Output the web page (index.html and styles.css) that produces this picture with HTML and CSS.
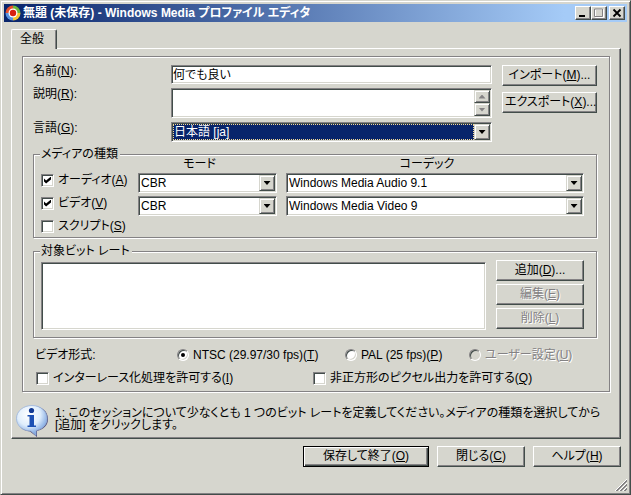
FILE: index.html
```
<!DOCTYPE html>
<html lang="ja">

<head>
    <meta charset="UTF-8">
    <meta name="viewport" content="width=device-width, initial-scale=1.0">
    <title>Windows Media プロファイル エディタ</title>
    <link rel="stylesheet" href="styles.css">
</head>

<body>
    <div class="window">
        <header class="titlebar">
            <svg class="app-icon" width="16" height="16" viewBox="0 0 16 16">
                <path d="M8 8V.5A7.5 7.5 0 0 0 .5 8z" fill="#e8502a" />
                <path d="M8 8V.5A7.5 7.5 0 0 1 15.5 8z" fill="#6cb83c" />
                <path d="M8 8h7.5A7.5 7.5 0 0 1 8 15.5z" fill="#f4c430" />
                <path d="M8 8H.5A7.5 7.5 0 0 0 8 15.5z" fill="#5a94e0" />
                <circle cx="8" cy="8" r="4.5" fill="#fff" />
                <circle cx="8" cy="8" r="3.2" fill="#d82010" />
            </svg>
            <h1>無題 (未保存) - Windows Media プロファイル エディタ</h1>
            <div class="captions">
                <button type="button" class="caption" aria-label="最小化">
                    <svg width="12" height="10" viewBox="0 0 12 10"><path d="M2 7h6v2H2z" /></svg>
                </button>
                <button type="button" class="caption" aria-label="最大化" disabled>
                    <svg width="12" height="10" viewBox="0 0 12 10"><path d="M2.500 1.500h8v8h-8z" fill="none" stroke="#fff" /><path d="M1.500 1h8v7.500h-8z" fill="none" stroke="#848284" /></svg>
                </button>
                <button type="button" class="caption close" aria-label="閉じる">
                    <svg width="12" height="10" viewBox="0 0 12 10"><path d="M2.500 1.500l7 7M9.500 1.500l-7 7" stroke="#000" stroke-width="1.800" /></svg>
                </button>
            </div>
        </header>

        <main class="sheet">
            <div class="tabs" role="tablist">
                <button type="button" class="tab" role="tab" aria-selected="true">全般</button>
            </div>
            <div class="panel">
                <form class="frame">
                    <div class="profile">
                        <div class="fields">
                            <label for="name">名前(<u>N</u>):</label>
                            <input type="text" id="name" class="sunken" value="何でも良い">

                            <label for="description">説明(<u>R</u>):</label>
                            <div class="memo sunken">
                                <textarea id="description"></textarea>
                                <div class="scroll">
                                    <span class="arrow up"></span>
                                    <span class="arrow"></span>
                                </div>
                            </div>

                            <label for="language">言語(<u>G</u>):</label>
                            <div class="combo sunken focused">
                                <select id="language"><option>日本語 [ja]</option></select>
                                <span class="arrow"></span>
                            </div>
                        </div>
                        <div class="side wide">
                            <button type="button" class="btn">インポート(<u>M</u>)...</button>
                            <button type="button" class="btn">エクスポート(<u>X</u>)...</button>
                        </div>
                    </div>

                    <fieldset>
                        <legend>メディアの種類</legend>
                        <div class="media">
                            <span></span>
                            <span class="heading">モード</span>
                            <span class="heading">コーデック</span>

                            <label class="option"><input type="checkbox" checked><span>オーディオ(<u>A</u>)</span></label>
                            <div class="combo sunken">
                                <select aria-label="オーディオ モード"><option>CBR</option></select>
                                <span class="arrow"></span>
                            </div>
                            <div class="combo sunken">
                                <select aria-label="オーディオ コーデック"><option>Windows Media Audio 9.1</option></select>
                                <span class="arrow"></span>
                            </div>

                            <label class="option"><input type="checkbox" checked><span>ビデオ(<u>V</u>)</span></label>
                            <div class="combo sunken">
                                <select aria-label="ビデオ モード"><option>CBR</option></select>
                                <span class="arrow"></span>
                            </div>
                            <div class="combo sunken">
                                <select aria-label="ビデオ コーデック"><option>Windows Media Video 9</option></select>
                                <span class="arrow"></span>
                            </div>

                            <label class="option"><input type="checkbox"><span>スクリプト(<u>S</u>)</span></label>
                        </div>
                    </fieldset>

                    <fieldset>
                        <legend>対象ビット レート</legend>
                        <div class="rates">
                            <select class="list sunken" size="5" aria-label="対象ビット レート"></select>
                            <div class="side">
                                <button type="button" class="btn">追加(<u>D</u>)...</button>
                                <button type="button" class="btn" disabled>編集(<u>E</u>)</button>
                                <button type="button" class="btn" disabled>削除(<u>L</u>)</button>
                            </div>
                        </div>
                    </fieldset>

                    <div class="format">
                        <span>ビデオ形式:</span>
                        <label class="option"><input type="radio" name="format" checked><span>NTSC (29.97/30 fps)(<u>T</u>)</span></label>
                        <label class="option"><input type="radio" name="format"><span>PAL (25 fps)(<u>P</u>)</span></label>
                        <label class="option disabled"><input type="radio" name="format" disabled><span>ユーザー設定(<u>U</u>)</span></label>
                    </div>
                    <div class="output">
                        <label class="option"><input type="checkbox"><span>インターレース化処理を許可する(<u>I</u>)</span></label>
                        <label class="option"><input type="checkbox"><span>非正方形のピクセル出力を許可する(<u>Q</u>)</span></label>
                    </div>
                </form>

                <div class="info">
                    <svg width="32" height="32" viewBox="0 0 32 32">
                        <defs>
                            <radialGradient id="bubble" cx=".4" cy=".3" r=".75">
                                <stop offset="0" stop-color="#fff" />
                                <stop offset=".5" stop-color="#e0eefc" />
                                <stop offset="1" stop-color="#6090d8" />
                            </radialGradient>
                        </defs>
                        <path d="M17 1C26 1 32 6.500 32 14c0 6-4 10-11 12v6l-7-5.500C6 26 2 21 2 14 2 6.500 8 1 17 1z" fill="#4a4878" />
                        <path d="M16 .5C24.500.5 31 6 31 13.500c0 6-4 10.500-11 12v5l-5-4.500C7 26 .5 21 .5 13.500.5 6 7.500.5 16 .5z" fill="url(#bubble)" stroke="#9ab4dc" stroke-width=".8" />
                        <circle cx="15.500" cy="5.500" r="2.600" fill="#123a94" />
                        <path d="M11.500 10h6.500v10.500h2V22h-8.500v-1.500h2v-9h-2z" fill="#1c50b4" />
                    </svg>
                    <p>1: このセッションについて少なくとも 1 つのビット レートを定義してください。メディアの種類を選択してから [追加] をクリックします。</p>
                </div>
            </div>

            <div class="actions">
                <button type="button" class="btn default">保存して終了(<u>O</u>)</button>
                <button type="button" class="btn">閉じる(<u>C</u>)</button>
                <button type="button" class="btn">ヘルプ(<u>H</u>)</button>
            </div>
        </main>

        <svg class="grip" width="12" height="12" viewBox="0 0 12 12">
            <path d="M0 12L12 0M4 12l8-8M8 12l4-4" stroke="#fff" />
            <path d="M1 12L12 1M2 12L12 2M5 12l7-7M6 12l6-6M9 12l3-3M10 12l2-2" stroke="#848284" />
        </svg>
    </div>
</body>

</html>
```

FILE: styles.css
```
* {
    box-sizing: border-box;
}

body {
    margin: 0;
    background-color: #d6d6ce;
    color: #000;
    font-family: "Liberation Sans", "Noto Sans CJK JP", sans-serif;
    font-size: 12px;
    line-height: 12px;
    font-feature-settings: "palt";
}

button,
input,
select,
textarea {
    margin: 0;
    font: inherit;
    font-feature-settings: inherit;
    color: inherit;
    border-radius: 0;
    outline: none;
}

.window {
    position: relative;
    min-height: 100vh;
    padding: 3px;
    border: 1px solid #d6d6ce;
    border-right-color: #424d4a;
    border-bottom-color: #424d4a;
    box-shadow: inset 1px 1px #fff, inset -1px -1px #848284;
}

/* title bar */
.titlebar {
    display: flex;
    align-items: center;
    height: 18px;
    padding: 0 2px 0 1px;
    background: linear-gradient(to right, #08246b, #a5cbf7 90%);
    color: #fff;
}

.titlebar h1 {
    flex: 1;
    margin: 0 0 0 2px;
    font-size: 12px;
    white-space: nowrap;
}

.captions {
    display: flex;
}

.caption {
    display: block;
    width: 16px;
    height: 14px;
    padding: 1px;
    line-height: 0;
    background-color: #d6d6ce;
    border: 1px solid #fff;
    border-right-color: #424d4a;
    border-bottom-color: #424d4a;
    box-shadow: inset -1px -1px #848284;
}

.close {
    margin-left: 2px;
}

/* tab sheet */
.sheet {
    padding: 7px 6px 0 7px;
}

.tabs {
    display: flex;
}

.tab {
    position: relative;
    width: 46px;
    height: 20px;
    margin-bottom: -1px;
    padding: 0 4px 2px 0;
    background-color: #d6d6ce;
    border: 1px solid #fff;
    border-right: 1px solid #424d4a;
    border-bottom: none;
    border-radius: 2px 2px 0 0;
    box-shadow: inset -1px 0 #848284;
}

.panel {
    padding: 7px 10px 1px;
    border: 1px solid #fff;
    border-right-color: #424d4a;
    border-bottom-color: #424d4a;
    box-shadow: inset -1px -1px #848284;
}

.frame {
    padding: 8px 12px 6px 10px;
    border: 1px solid #848284;
    box-shadow: inset 1px 1px #fff, 1px 1px #fff;
}

.sunken {
    background-color: #fff;
    border: 1px solid #848284;
    border-right-color: #fff;
    border-bottom-color: #fff;
    box-shadow: inset 1px 1px #424d4a, inset -1px -1px #d6d6ce;
}

.btn {
    height: 21px;
    padding: 0 2px 1px;
    background-color: #d6d6ce;
    border: 1px solid #fff;
    border-right-color: #424d4a;
    border-bottom-color: #424d4a;
    box-shadow: inset -1px -1px #848284;
    white-space: nowrap;
}

.btn:disabled,
.disabled {
    color: #848284;
    text-shadow: 1px 1px #fff;
}

/* name, description, language */
.profile {
    display: flex;
    gap: 10px;
    margin-bottom: 6px;
}

.fields {
    flex: 1;
    display: grid;
    grid-template-columns: 138px 1fr;
    row-gap: 4px;
}

.fields input {
    width: 100%;
    height: 19px;
    padding: 0 1px 2px;
}

.memo {
    display: flex;
    height: 30px;
    padding: 1px;
}

.memo textarea {
    flex: 1;
    min-width: 0;
    padding: 1px;
    border: none;
    background: none;
    resize: none;
}

.scroll {
    display: flex;
    flex-direction: column;
    width: 16px;
    color: #848284;
}

.arrow {
    flex: 1;
    display: flex;
    align-items: center;
    justify-content: center;
    background-color: #d6d6ce;
    border: 1px solid #d6d6ce;
    border-right-color: #424d4a;
    border-bottom-color: #424d4a;
    box-shadow: inset 1px 1px #fff, inset -1px -1px #848284;
}

.arrow::before {
    content: "";
    width: 7px;
    height: 4px;
    background-color: currentColor;
    clip-path: polygon(0 0, 100% 0, 50% 100%);
}

.arrow.up::before {
    clip-path: polygon(0 100%, 100% 100%, 50% 0);
}

.combo {
    position: relative;
    height: 20px;
    padding: 2px;
}

.combo select {
    display: block;
    width: 100%;
    height: 100%;
    padding: 0 17px 0 0;
    border: none;
    background: none;
    line-height: 14px;
    appearance: none;
}

/* drop button drawn over the end of the select */
.combo .arrow {
    position: absolute;
    top: 1px;
    right: 1px;
    bottom: 1px;
    width: 16px;
    pointer-events: none;
}

.combo.focused {
    padding: 1px;
}

.focused select {
    width: calc(100% - 16px);
    padding: 0;
    background-color: #08246b;
    border: 1px dotted #f7db94;
    color: #fff;
}

.side {
    display: flex;
    flex-direction: column;
    gap: 3px;
    width: 88px;
}

.wide {
    gap: 6px;
    width: 95px;
}

/* groups */
fieldset {
    min-width: 0;
    margin: 0 0 7px;
    padding: 0 12px 4px 7px;
    border: 1px solid #848284;
    box-shadow: inset 1px 1px #fff, 1px 1px #fff;
}

legend {
    padding: 0 2px 0 1px;
    margin-left: -1px;
    background-color: #d6d6ce;
}

.media {
    display: grid;
    grid-template-columns: 88px 139px 1fr;
    align-items: start;
    gap: 3px 9px;
}

.heading {
    margin-top: -2px;
    padding-right: 16px;
    text-align: center;
}

.option {
    display: flex;
    align-items: center;
    gap: 4px;
    height: 14px;
    white-space: nowrap;
}

.option input {
    appearance: none;
    flex: none;
    display: flex;
    align-items: center;
    justify-content: center;
    width: 13px;
    height: 13px;
    background-color: #fff;
    border: 1px solid #848284;
    border-right-color: #fff;
    border-bottom-color: #fff;
    box-shadow: inset 1px 1px #424d4a, inset -1px -1px #d6d6ce;
}

.option input[type="checkbox"]:checked::before {
    content: "";
    width: 7px;
    height: 7px;
    background-color: #000;
    clip-path: polygon(0 28%, 30% 58%, 100% 0, 100% 42%, 30% 100%, 0 70%);
}

.option input[type="radio"] {
    width: 12px;
    height: 12px;
    border-radius: 50%;
}

.option input[type="radio"]:checked::before {
    content: "";
    width: 4px;
    height: 4px;
    border-radius: 50%;
    background-color: #000;
}

.option input:disabled {
    background-color: #d6d6ce;
}

.rates {
    display: flex;
    gap: 10px;
    padding: 3px 0;
}

.list {
    flex: 1;
    min-width: 0;
    height: 68px;
    margin-top: 2px;
}

/* video format */
.format {
    display: grid;
    grid-template-columns: 142px 168px 124px 1fr;
    align-items: center;
    margin: 10px 0 9px 2px;
}

.output {
    display: grid;
    grid-template-columns: 277px 1fr;
    margin-left: 3px;
}

.info {
    display: flex;
    gap: 7px;
    margin: 13px -6px 0;
}

.info svg {
    flex: none;
}

.info p {
    margin: 2px 0 0;
}

/* bottom buttons */
.actions {
    display: flex;
    justify-content: flex-end;
    gap: 8px;
    margin-top: 7px;
}

.actions .btn {
    width: 88px;
}

.actions .default {
    width: 126px;
    border-color: #000;
    box-shadow: inset 1px 1px #fff, inset -1px -1px #424d4a, inset -2px -2px #848284;
}

.grip {
    position: absolute;
    right: 3px;
    bottom: 3px;
}
```
